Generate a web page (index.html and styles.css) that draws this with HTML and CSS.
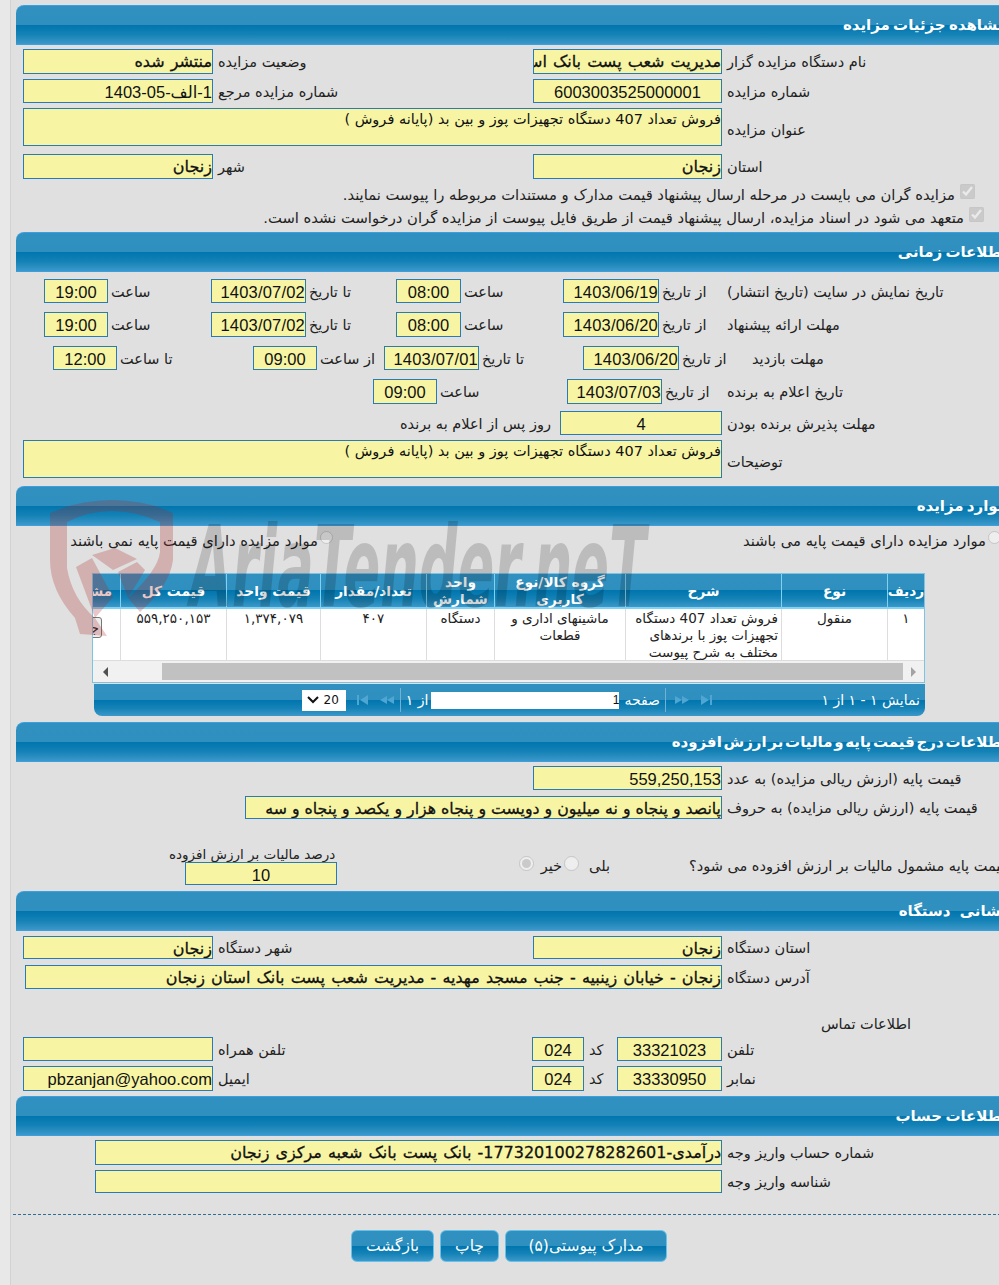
FILE: index.html
```html
<!DOCTYPE html>
<html lang="fa">
<head>
<meta charset="utf-8">
<title>مشاهده جزئیات مزایده</title>
<link rel="stylesheet" href="styles.css">
</head>
<body>
<div class="shell">
<main class="page" dir="rtl">

<h2 class="hdr">مشاهده جزئیات مزایده</h2>
<div class="row mt4 h25"><div class="lab">نام دستگاه مزایده گزار</div><div class="field w189 em">مدیریت شعب پست بانک استان زنجان</div><div class="cell w320">وضعیت مزایده</div><div class="field w190 em">منتشر شده</div></div>
<div class="row mt5 h24"><div class="lab">شماره مزایده</div><div class="field w189 ctr">6003003525000001</div><div class="cell w320">شماره مزایده مرجع</div><div class="field w190">1-الف-05-1403</div></div>
<div class="row mt5 h38"><div class="lab">عنوان مزایده</div><div class="field w699 area">فروش تعداد 407 دستگاه تجهیزات پوز و بین بد (پایانه فروش )</div></div>
<div class="row mt8 h25"><div class="lab">استان</div><div class="field w189 em">زنجان</div><div class="cell w320">شهر</div><div class="field w190 em">زنجان</div></div>
<div class="row mt4 h22 chk1 wide"><input class="box" type="checkbox" checked disabled><span>مزایده گران می بایست در مرحله ارسال پیشنهاد قیمت مدارک و مستندات مربوطه را پیوست نمایند.</span></div>
<div class="row mt1 h22 chk2 wide"><input class="box" type="checkbox" checked disabled><span>متعهد می شود در اسناد مزایده، ارسال پیشنهاد قیمت از طریق فایل پیوست از مزایده گران درخواست نشده است.</span></div>

<h2 class="hdr mt4">اطلاعات زمانی</h2>
<div class="row mt7 h24"><div class="lab">تاریخ نمایش در سایت (تاریخ انتشار)</div><div class="cell w63">از تاریخ</div><div class="field w96">1403/06/19</div><div class="cell w102">ساعت</div><div class="field w65 ctr">08:00</div><div class="cell w90">تا تاریخ</div><div class="field w95">1403/07/02</div><div class="cell w103">ساعت</div><div class="field w64 ctr">19:00</div></div>
<div class="row mt9 h25"><div class="lab">مهلت ارائه پیشنهاد</div><div class="cell w63">از تاریخ</div><div class="field w96">1403/06/20</div><div class="cell w102">ساعت</div><div class="field w65 ctr">08:00</div><div class="cell w90">تا تاریخ</div><div class="field w95">1403/07/02</div><div class="cell w103">ساعت</div><div class="field w64 ctr">19:00</div></div>
<div class="row mt9 h24"><div class="lab w264">مهلت بازدید</div><div class="cell w73">از تاریخ</div><div class="field w96">1403/06/20</div><div class="cell w104">تا تاریخ</div><div class="field w95">1403/07/01</div><div class="cell w67">از ساعت</div><div class="field w64 ctr">09:00</div><div class="cell w136">تا ساعت</div><div class="field w64 ctr">12:00</div></div>
<div class="row mt9 h25"><div class="lab">تاریخ اعلام به برنده</div><div class="cell w60">از تاریخ</div><div class="field w95">1403/07/03</div><div class="cell w130">ساعت</div><div class="field w64 ctr">09:00</div></div>
<div class="row mt7 h24"><div class="lab">مهلت پذیرش برنده بودن</div><div class="field w162 ctr">4</div><div class="after">روز پس از اعلام به برنده</div></div>
<div class="row mt5 h38"><div class="lab">توضیحات</div><div class="field w699 area">فروش تعداد 407 دستگاه تجهیزات پوز و بین بد (پایانه فروش )</div></div>

<h2 class="hdr mt8">موارد مزایده</h2>
<div class="row mt3 h22 radios wide"><div class="radio-a"><input class="rd" type="radio" name="base" disabled><span>موارد مزایده دارای قیمت پایه می باشند</span></div><div class="radio-b"><input class="rd" type="radio" name="base" disabled><span>موارد مزایده دارای قیمت پایه نمی باشند</span></div></div>

<section class="grid">
  <div class="grid-clip">
    <div class="grid-cols grid-head">
      <div>ردیف</div><div>نوع</div><div>شرح</div><div>گروه کالا/نوع کاربری</div><div>واحد شمارش</div><div>تعداد/مقدار</div><div>قیمت واحد</div><div>قیمت کل</div><div>مشاهده</div>
    </div>
    <div class="grid-cols grid-body">
      <div>۱</div><div>منقول</div><div class="desc">فروش تعداد 407 دستگاه تجهیزات پوز با برندهای مختلف به شرح پیوست</div><div>ماشینهای اداری و قطعات</div><div>دستگاه</div><div>۴۰۷</div><div>۱,۳۷۴,۰۷۹</div><div>۵۵۹,۲۵۰,۱۵۳</div><div><button class="mini" type="button">جزئیات</button></div>
    </div>
  </div>
  <div class="sbar" dir="ltr"><span class="arr arr-l"></span><span class="track"><span class="thumb"></span></span><span class="arr arr-r"></span></div>
</section>
<div class="pager">
  <div class="pg-info">نمایش ۱ - ۱ از ۱</div>
  <svg class="pg-ico ml4" width="38" height="10" viewBox="0 0 38 10"><path d="M0 1l7 4-7 4zM7 1l7 4-7 4zM26 0l8 5-8 5zM35 0h2v10h-2z" fill="#4fa6d2"/></svg>
  <span class="pg-sep"></span>
  <span class="pg-txt">صفحه</span>
  <div class="pg-input">1</div>
  <span class="pg-txt">از ۱</span>
  <span class="pg-sep"></span>
  <svg class="pg-ico" width="38" height="10" viewBox="0 0 38 10"><path d="M0 0h2v10H0zM11 0L3 5l8 5zM30 1l-7 4 7 4zM37 1l-7 4 7 4z" fill="#4fa6d2"/></svg>
  <div class="pg-select" dir="ltr"><svg width="12" height="8" viewBox="0 0 12 8"><path d="M1 1l5 5 5-5" fill="none" stroke="#111" stroke-width="2"/></svg><span>20</span></div>
</div>

<h2 class="hdr mt6 tight">اطلاعات درج قیمت پایه و مالیات بر ارزش افزوده</h2>
<div class="row mt4 h24"><div class="lab">قیمت پایه (ارزش ریالی مزایده) به عدد</div><div class="field w189">559,250,153</div></div>
<div class="row mt6 h23"><div class="lab">قیمت پایه (ارزش ریالی مزایده) به حروف</div><div class="field w477 em">پانصد و پنجاه و نه میلیون و دویست و پنجاه هزار و یکصد و پنجاه و سه</div></div>
<div class="row mt28 h38 tax">
  <div class="cell w330">قیمت پایه مشمول مالیات بر ارزش افزوده می شود؟</div>
  <div class="tax-radios"><span>بلی</span><input class="rd" type="radio" name="tax" disabled><span>خیر</span><input class="rd" type="radio" name="tax" checked disabled></div>
  <div class="tax-col"><div class="tax-lab">درصد مالیات بر ارزش افزوده</div><div class="field w152 ctr">10</div></div>
</div>

<h2 class="hdr mt6 spread">نشانی دستگاه</h2>
<div class="row mt5 h23"><div class="lab">استان دستگاه</div><div class="field w189 em">زنجان</div><div class="cell w320">شهر دستگاه</div><div class="field w190 em">زنجان</div></div>
<div class="row mt6 h24"><div class="lab">آدرس دستگاه</div><div class="field w697 em">زنجان - خیابان زینبیه - جنب مسجد مهدیه - مدیریت شعب پست بانک استان زنجان</div></div>
<div class="row mt25 h20 contact">اطلاعات تماس</div>
<div class="row mt3 h24"><div class="lab">تلفن</div><div class="field w105 ctr">33321023</div><div class="cell w33">کد</div><div class="field w52 ctr">024</div><div class="cell w319">تلفن همراه</div><div class="field w190"></div></div>
<div class="row mt5 h25"><div class="lab">نمابر</div><div class="field w105 ctr">33330950</div><div class="cell w33">کد</div><div class="field w52 ctr">024</div><div class="cell w319">ایمیل</div><div class="field w190">pbzanjan@yahoo.com</div></div>

<h2 class="hdr mt5">اطلاعات حساب</h2>
<div class="row mt4 h25"><div class="lab">شماره حساب واریز وجه</div><div class="field w627 em">درآمدی-177320100278282601- بانک پست بانک شعبه مرکزی زنجان</div></div>
<div class="row mt5 h23"><div class="lab">شناسه واریز وجه</div><div class="field w627"></div></div>

<div class="rule"></div>
<div class="actions">
  <button class="btn w162" type="button">مدارک پیوستی(۵)</button>
  <button class="btn w59" type="button">چاپ</button>
  <button class="btn w83" type="button">بازگشت</button>
</div>
</main>

<svg class="mark" width="640" height="160" viewBox="0 0 640 160" aria-hidden="true">
  <path class="mark-red" d="M0 13Q30 0 62 0Q95 0 123 13V60Q120 85 90 112L78 98Q108 70 110 52V22Q85 11 62 11Q38 11 17 22V68Q22 98 45 118L57 136L30 134L25 118Q0 90 0 60Z"/>
  <path class="mark-red" d="M26 67L42 58L63 97L45 118ZM42 55L65 48L87 59L63 70ZM68 72L87 62L95 70L78 98Z"/>
  <text class="mark-txt" x="140" y="106" textLength="456" lengthAdjust="spacingAndGlyphs">AriaTender.neT</text>
</svg>
</div>
</body>
</html>
```

FILE: styles.css
```css
* { box-sizing: border-box; }
html, body { margin: 0; padding: 0; height: 1285px; overflow: hidden; background: #e8e8e8; }
body { font-family: "DejaVu Sans", sans-serif; font-size: 14.5px; color: #222; }
.shell { position: relative; margin-left: 10px; width: 1020px; height: 1285px; padding: 5px 0 0 5px; background: #e0e0e0; border-left: 1px solid #d2d2d2; }
.page { width: 1000px; }

.hdr { margin: 0; height: 40px; line-height: 38px; padding-right: 9px; font-size: 15px; word-spacing: -2px; font-weight: bold; color: #fff; border-top: 1px solid #3c9fe0; border-bottom: 1px solid #3c9fe0; border-top-right-radius: 8px; border-top-left-radius: 8px; background: linear-gradient(#3090c0 0, #2f8fbe 50%, #0075ae 50%, #1482b6 75%, #3c98c9 100%); white-space: nowrap; }
.hdr.tight { word-spacing: -3.5px; }
.hdr.spread { word-spacing: 4px; }

.row { display: flex; align-items: center; white-space: nowrap; }
.wide { font-size: 14.75px; }
.h20 { height: 20px; } .h22 { height: 22px; } .h23 { height: 23px; } .h24 { height: 24px; } .h25 { height: 25px; } .h38 { height: 38px; }
.mt1 { margin-top: 1px; } .mt3 { margin-top: 3px; } .mt4 { margin-top: 4px; } .mt5 { margin-top: 5px; } .mt6 { margin-top: 6px; } .mt7 { margin-top: 7px; } .mt8 { margin-top: 8px; } .mt9 { margin-top: 9px; } .mt25 { margin-top: 25px; } .mt28 { margin-top: 28px; }

.lab { flex: none; width: 294px; text-align: left; padding: 1px 0 0 5px; }
.lab.w264 { width: 264px; padding-left: 0; }
.h38 > .lab { padding-top: 5px; }
.cell { flex: none; text-align: left; padding: 1px 0 0 3px; }
.cell.w320, .cell.w319, .cell.w33 { padding-left: 5px; }
.after { padding: 1px 9px 0 0; }

.field { flex: none; height: 100%; border: 1px solid #2a7bb0; background: #f7f5a3; color: #111; font-family: "Liberation Sans", "DejaVu Sans", sans-serif; font-size: 16.5px; line-height: 22px; padding-top: 1px; overflow: hidden; white-space: nowrap; text-align: right; }
.field.w95, .field.w96 { letter-spacing: .2px; }
.field.em { font-family: "DejaVu Sans", sans-serif; font-size: 16px; word-spacing: 1px; font-weight: normal; -webkit-text-stroke: .3px #111; }
.field.em.w477 { word-spacing: 0; font-size: 15.75px; }
.field.ctr { text-align: center; }
.field.area { font-family: "DejaVu Sans", sans-serif; font-size: 14.5px; line-height: 19px; white-space: normal; }

.w33 { width: 33px; } .w52 { width: 52px; } .w59 { width: 59px; } .w60 { width: 60px; } .w63 { width: 63px; } .w64 { width: 64px; } .w65 { width: 65px; } .w67 { width: 67px; } .w73 { width: 73px; } .w83 { width: 83px; } .w90 { width: 90px; } .w95 { width: 95px; } .w96 { width: 96px; } .w102 { width: 102px; } .w103 { width: 103px; } .w104 { width: 104px; } .w105 { width: 105px; } .w130 { width: 130px; } .w136 { width: 136px; } .w152 { width: 152px; } .w162 { width: 162px; } .w189 { width: 189px; } .w190 { width: 190px; } .w319 { width: 319px; } .w320 { width: 320px; } .w330 { width: 330px; } .w477 { width: 477px; } .w627 { width: 627px; } .w697 { width: 697px; } .w699 { width: 699px; }

.box { flex: none; width: 15px; height: 15px; margin: -6px 0 0 5px; }
.chk1 { padding-right: 41px; }
.chk2 { padding-right: 32px; }

.radio-a { flex: none; width: 683px; display: flex; align-items: center; padding-right: 15px; }
.radio-b { display: flex; align-items: center; }
.rd { flex: none; width: 13px; height: 13px; margin: -5px 0 0 2px; }

.grid { width: 833px; margin: 22px 91px 0 0; border: 1px solid #7fc3e4; background: #fff; }
.grid-clip { overflow: hidden; }
.grid-cols { display: grid; grid-template-columns: 37px 106px 156px 131px 68px 106px 94px 106px 70px; width: 874px; }
.grid-head { height: 35px; background: linear-gradient(#3090c0 0, #2f8fbe 50%, #0075ae 50%, #1482b6 75%, #3c98c9 100%); border-bottom: 2px solid #7fd2f2; color: #fff; font-weight: bold; font-size: 13.75px; line-height: 17px; text-align: center; }
.grid-head > div { display: flex; align-items: center; justify-content: center; padding: 0 4px; border-left: 1px solid #7fd2f2; }
.grid-body { height: 52px; overflow: hidden; background: #fff; border-bottom: 1px solid #ddd; font-size: 13.5px; line-height: 17px; text-align: center; }
.grid-body > div { padding: 1px 3px 0; border-left: 1px solid #ddd; overflow: hidden; }
.grid-body .desc { text-align: right; }
.grid-body > div:last-child { padding: 0; }
.mini { display: block; margin: 8px 18px 0 0; width: 60px; height: 21px; padding: 0 2px 0 0; font: 14px "DejaVu Sans", sans-serif; text-align: right; color: #222; background: #eee; border: 1px solid #777; border-radius: 3px; }

.sbar { display: flex; height: 21px; background: #f1f1f1; }
.arr { flex: none; width: 21px; display: flex; align-items: center; justify-content: center; }
.arr::before { content: ""; border: 5px solid transparent; }
.arr-l::before { border-left-width: 0; border-right: 5px solid #505050; margin-left: 3px; }
.arr-r::before { border-right-width: 0; border-left: 5px solid #a3a3a3; }
.track { flex: 1; padding: 2px 0 2px 48px; }
.thumb { display: block; height: 100%; background: #c1c1c1; }

.pager { width: 831px; height: 32px; margin: 1px 91px 0 0; display: flex; align-items: center; color: #fff; font-size: 14px; border-bottom-left-radius: 8px; border-bottom-right-radius: 8px; background: linear-gradient(#3090c0 0, #2f8fbe 50%, #0075ae 50%, #1482b6 75%, #3c98c9 100%); white-space: nowrap; }
.pg-info { flex: none; width: 212px; padding-right: 5px; }
.pg-ico { flex: none; }
.ml4 { margin-left: 4px; }
.pg-sep { flex: none; width: 1px; height: 24px; margin: 0 5px; background: #6fb2d6; }
.pg-txt { flex: none; }
.pg-input { flex: none; width: 188px; height: 17px; margin: 0 5px 0 3px; background: #fff; color: #111; font: 12px/17px "Liberation Sans", sans-serif; text-align: right; }
.pg-select { flex: none; width: 44px; height: 21px; margin-right: 11px; display: flex; align-items: center; justify-content: space-between; padding: 0 7px 0 5px; background: #fff; color: #111; font: 12px "DejaVu Sans", sans-serif; }

.tax { align-items: stretch; }
.tax > .cell { align-self: flex-end; padding-bottom: 11px; }
.tax-radios { flex: none; width: 349px; display: flex; align-items: flex-end; padding: 0 76px 11px 0; }
.tax-radios span { margin-left: 10px; }
.tax-radios span + .rd + span { margin-left: 7px; }
.tax-radios .rd { margin: 0 0 3px 2px; width: 15px; height: 15px; }
.tax-col { flex: none; width: 152px; display: flex; flex-direction: column; }
.tax-lab { height: 15px; line-height: 15px; font-size: 13.5px; text-align: left; margin: 0 0 0 -16px; }
.tax-col .field { height: 23px; }
.contact { padding-right: 105px; }

.rule { margin: 21px 0 0 -3px; height: 1px; border-top: 1px dashed #2f6f96; }
.actions { display: flex; justify-content: flex-start; gap: 6px; margin-top: 15px; padding-right: 349px; }
.btn { flex: none; height: 32px; padding: 0; color: #fff; font: 15.5px "DejaVu Sans", sans-serif; border: 1px solid #66c2ea; border-radius: 6px; background: linear-gradient(#3090c0 0, #2f8fbe 50%, #0075ae 50%, #1482b6 75%, #3c98c9 100%); }

.mark { position: absolute; left: 39px; top: 500px; pointer-events: none; overflow: visible; }
.mark-red { fill: rgba(170, 40, 40, .26); }
.mark-txt { font-family: "DejaVu Sans", sans-serif; font-weight: bold; font-style: italic; font-size: 112px; fill: rgba(0, 0, 0, .16); }
```
